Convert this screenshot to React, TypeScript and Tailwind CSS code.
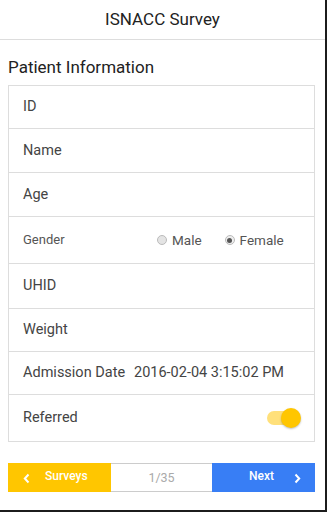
import React from "react";

function Row({ children, h }: { children: React.ReactNode; h: string }) {
  return (
    <div className={`flex items-center border-t border-[#dddddd] pl-[14px] pr-[12px] ${h}`}>
      {children}
    </div>
  );
}

export default function App() {
  return (
    <div className="w-[327px] h-[512px] bg-[#1c1c1c]" style={{ fontFamily: "Roboto, 'Liberation Sans', sans-serif" }}>
      <div className="w-[325px] h-[510px] bg-white flex flex-col">
        <div className="h-[40px] border-b border-[#dddddd] flex items-center justify-center text-[17px] text-[#222]">
          ISNACC Survey
        </div>
        <div className="pl-2 pt-[17px] text-[17px] leading-[20px] text-[#222]">Patient Information</div>
        <div className="ml-2 mt-[8px] w-[307px] border border-[#dddddd] [&>*:first-child]:border-t-0 text-[14.5px] text-[#444]">
          <Row h="h-[42px]">ID</Row>
          <Row h="h-[44px]">Name</Row>
          <Row h="h-[44px]">Age</Row>
          <Row h="h-[47px]">
            <span className="text-[13px] text-[#555] w-[134px]">Gender</span>
            <span className="flex items-center text-[13.5px] text-[#555]">
              <span className="w-[10px] h-[10px] rounded-full border border-[#bbb] bg-[#e4e4e4] mr-[5px]" />
              Male
            </span>
            <span className="flex items-center text-[13.5px] text-[#555] ml-[23px]">
              <span className="w-[10px] h-[10px] rounded-full border border-[#bbb] bg-[#eee] mr-[5px] flex items-center justify-center">
                <span className="w-[5px] h-[5px] rounded-full bg-[#555]" />
              </span>
              Female
            </span>
          </Row>
          <Row h="h-[45px]">UHID</Row>
          <Row h="h-[43px]">Weight</Row>
          <Row h="h-[43px]">
            <span className="w-[111px]">Admission Date</span>
            <span>2016-02-04 3:15:02 PM</span>
          </Row>
          <Row h="h-[47px]">
            <span className="flex-1">Referred</span>
            <span className="relative w-[34px] h-[20px] mr-[1px] flex items-center">
              <span className="absolute left-0 right-[6px] h-[14px] rounded-full bg-[#ffe07a]" />
              <span className="absolute right-0 w-[20px] h-[20px] rounded-full bg-[#ffc600] shadow-[0_1px_2px_rgba(0,0,0,0.25)]" />
            </span>
          </Row>
        </div>
        <div className="ml-2 mt-[21px] w-[307px] h-[29px] flex text-[12px]">
          <div className="w-[103px] bg-[#ffc600] text-white flex items-center relative">
            <svg className="absolute left-[15px] top-[10px]" width="7" height="11" viewBox="0 0 7 11">
              <path d="M5.5 1.5 L1.8 5.5 L5.5 9.5" stroke="white" strokeWidth="2" fill="none" />
            </svg>
            <span className="ml-[37px] -mt-[3px] font-medium">Surveys</span>
          </div>
          <div className="w-[101px] border-y border-[#cccccc] flex items-center justify-center text-[#aaa] text-[12.5px] pt-[2px]">1/35</div>
          <div className="w-[103px] bg-[#387ef5] text-white flex items-center relative">
            <span className="ml-[37px] -mt-[3px] font-medium">Next</span>
            <svg className="absolute left-[82px] top-[10px]" width="7" height="11" viewBox="0 0 7 11">
              <path d="M1.5 1.5 L5.2 5.5 L1.5 9.5" stroke="white" strokeWidth="2" fill="none" />
            </svg>
          </div>
        </div>
      </div>
    </div>
  );
}
